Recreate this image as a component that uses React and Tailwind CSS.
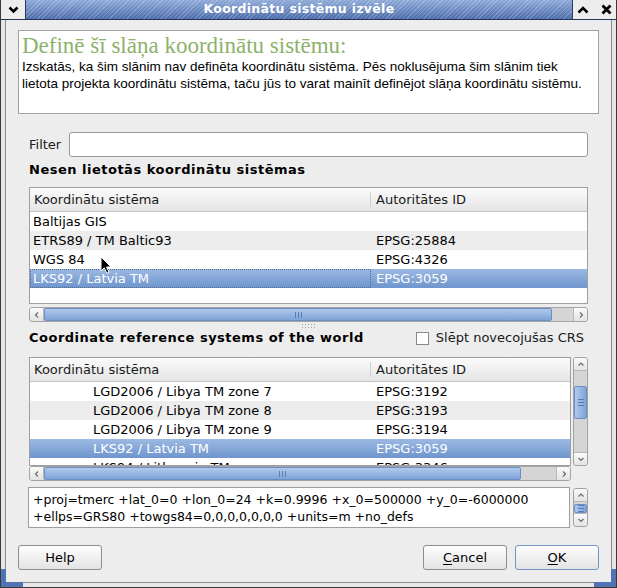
import React from 'react'

const ui = "font-['DejaVu_Sans',sans-serif]"

const recent = [
  { name: 'Baltijas GIS', id: '' },
  { name: 'ETRS89 / TM Baltic93', id: 'EPSG:25884' },
  { name: 'WGS 84', id: 'EPSG:4326' },
  { name: 'LKS92 / Latvia TM', id: 'EPSG:3059', selected: true },
]

const world = [
  { name: 'LGD2006 / Libya TM zone 7', id: 'EPSG:3192' },
  { name: 'LGD2006 / Libya TM zone 8', id: 'EPSG:3193' },
  { name: 'LGD2006 / Libya TM zone 9', id: 'EPSG:3194' },
  { name: 'LKS92 / Latvia TM', id: 'EPSG:3059', selected: true },
  { name: 'LKS94 / Lithuania TM', id: 'EPSG:3346' },
]

function Arrow({ dir, size = 8, stroke = '#6b6b6b', width = 1.2 }) {
  const d = {
    up: 'M1.5 5.5 L4 3 L6.5 5.5',
    down: 'M1.5 3 L4 5.5 L6.5 3',
    left: 'M5 1.5 L2.5 4 L5 6.5',
    right: 'M3 1.5 L5.5 4 L3 6.5',
  }[dir]
  return (
    <svg width={size} height={size} viewBox="0 0 8 8" fill="none">
      <path d={d} stroke={stroke} strokeWidth={width} />
    </svg>
  )
}

function ScrollButton({ dir, className = '' }) {
  return (
    <div className={`flex items-center justify-center bg-linear-to-b from-[#fbfbfb] to-[#e3e3e3] ${className}`}>
      <Arrow dir={dir} />
    </div>
  )
}

function Grip({ vertical }) {
  return (
    <div className={`flex ${vertical ? 'flex-col gap-[2px]' : 'gap-[2px]'}`}>
      {[0, 1, 2].map(i => (
        <span key={i} className={vertical ? 'h-px w-[6px] bg-[#5a7db7]' : 'w-px h-[6px] bg-[#5a7db7]'} />
      ))}
    </div>
  )
}

const thumbStyle = 'flex items-center justify-center rounded-[2px] border border-[#6b8ec6]'

function HScroll({ thumb, className = '' }) {
  return (
    <div className={`flex h-[15px] rounded-[3px] border border-[#a3a3a3] bg-[#d5d5d5] overflow-hidden ${className}`}>
      <ScrollButton dir="left" className="w-[14px] border-r border-[#b8b8b8]" />
      <div className={`${thumb} ${thumbStyle} bg-linear-to-b from-[#b0c9eb] to-[#7fa3d8]`}>
        <Grip />
      </div>
      <div className="flex-1" />
      <ScrollButton dir="right" className="w-[14px] border-l border-[#b8b8b8]" />
    </div>
  )
}

function VScroll({ before, thumb, className = '' }) {
  return (
    <div className={`flex flex-col w-[15px] rounded-[3px] border border-[#a3a3a3] bg-[#d5d5d5] overflow-hidden ${className}`}>
      <ScrollButton dir="up" className="h-[13px] border-b border-[#b8b8b8]" />
      <div className={before} />
      <div className={`${thumb} ${thumbStyle} bg-linear-to-r from-[#b0c9eb] to-[#7fa3d8]`}>
        <Grip vertical />
      </div>
      <div className="flex-1" />
      <ScrollButton dir="down" className="h-[13px] border-t border-[#b8b8b8]" />
    </div>
  )
}

function CrsTable({ rows, indent, className = '', focus }) {
  return (
    <div className={`border border-[#9f9f9f] bg-white overflow-hidden ${className}`}>
      <div className="flex h-[24px] border-b border-[#c6c6c6] bg-linear-to-b from-[#fbfbfb] to-[#e5e5e5] text-[#1a1a1a]">
        <div className="w-[340px] flex items-center pl-[4px]">Koordinātu sistēma</div>
        <div className="flex py-[4px]">
          <span className="w-px bg-[#cdd1c6]" />
        </div>
        <div className="flex-1 flex items-center pl-[5px]">Autoritātes ID</div>
      </div>
      {rows.map((row, i) => (
        <div
          key={row.name}
          className={`flex h-[19px] items-center ${
            row.selected
              ? 'bg-linear-to-b from-[#9db9e3] to-[#6e95cd] text-white'
              : i % 2 === 1
                ? 'bg-[#ededed] text-black'
                : 'bg-white text-black'
          }`}
        >
          <div
            className={`w-[341px] h-full flex items-center ${indent} ${
              row.selected && focus ? 'outline-1 outline-dotted outline-[#55698d] -outline-offset-1' : ''
            }`}
          >
            {row.name}
          </div>
          <div className="flex-1 pl-[5px]">{row.id}</div>
        </div>
      ))}
    </div>
  )
}

function WinButton({ children, def }) {
  return (
    <button
      className={`w-[84px] h-[25px] rounded-[3px] border bg-linear-to-b from-[#fdfdfd] to-[#e4e4e4] text-[13px] text-black ${
        def ? 'border-[#7493c6]' : 'border-[#8e8e8e]'
      }`}
    >
      {children}
    </button>
  )
}

export default function App() {
  return (
    <div className={`relative w-[617px] h-[588px] flex flex-col border-x border-b border-[#3a3a3a] bg-[#e6e6e6] overflow-hidden ${ui} text-[13px]`}>
      {/* Title bar */}
      <div className="flex h-[20px] border-b border-[#26345a]">
        <div className="w-[24px] flex items-center justify-center bg-[#ededed]">
          <svg width="11" height="8" viewBox="0 0 11 8">
            <path d="M1.5 1.5 L5.5 5.5 L9.5 1.5" fill="none" stroke="#000" strokeWidth="2.6" />
          </svg>
        </div>
        <div className="flex-1 flex items-center justify-center border-x border-[#2b3d66] bg-[repeating-linear-gradient(135deg,rgba(255,255,255,0.2)_0px,rgba(255,255,255,0.2)_1px,transparent_1px,transparent_3px),linear-gradient(to_bottom,#8eaad9,#4c6ca9)] text-white font-bold text-[12.5px] tracking-[0.3px]">
          Koordinātu sistēmu izvēle
        </div>
        <div className="w-[43px] flex items-center justify-between pl-[4px] pr-[4px] bg-[#ededed]">
          <svg width="12" height="8" viewBox="0 0 12 8">
            <path d="M1.5 6.5 L6 2 L10.5 6.5" fill="none" stroke="#000" strokeWidth="2.6" />
          </svg>
          <svg width="11" height="11" viewBox="0 0 11 11">
            <path d="M1.5 1.5 L9.5 9.5 M9.5 1.5 L1.5 9.5" fill="none" stroke="#000" strokeWidth="2.8" />
          </svg>
        </div>
      </div>

      {/* Frame */}
      <div className="flex-1 flex px-[4px] pb-[4px]">
        <div className="flex-1 flex flex-col border-x border-b border-[#8c8c8c] bg-[#ededed] px-[12px] pt-[10px]">
          {/* Header */}
          <div className="h-[84px] border border-[#a2a2a2] bg-white px-[3px] pt-[3px]">
            <div className="font-['Liberation_Serif',serif] text-[23px] leading-[24px] text-[#8db26c]">
              Definē šī slāņa koordinātu sistēmu:
            </div>
            <p className="font-['Liberation_Sans',Arial,sans-serif] text-[13.5px] leading-[17px] text-black">
              Izskatās, ka šim slānim nav definēta koordinātu sistēma. Pēs noklusējuma šim slānim tiek
              <br />
              lietota projekta koordinātu sistēma, taču jūs to varat mainīt definējot slāņa koordinātu sistēmu.
            </p>
          </div>

          <div className="mx-[11px] flex flex-col">
            {/* Filter */}
            <div className="mt-[18px] flex items-center gap-[8px] h-[25px]">
              <span className="text-[#1a1a1a]">Filter</span>
              <input className="flex-1 h-full rounded-[3px] border border-[#999] bg-white outline-none" />
            </div>

            <div className="mt-[5px] h-[16px] leading-[16px] font-bold tracking-[0.5px] text-black">
              Nesen lietotās koordinātu sistēmas
            </div>

            <CrsTable rows={recent} indent="pl-[3px]" focus className="mt-[9px] h-[117px]" />
            <HScroll thumb="w-[508px]" className="mt-[3px]" />

            {/* Splitter handle */}
            <div className="h-[8px] flex justify-center pt-[1px]">
              <div className="w-[16px] h-[5px] bg-[radial-gradient(circle,#a3a3a3_0.7px,transparent_0.9px)] bg-size-[3px_3px]" />
            </div>

            <div className="h-[16px] flex items-center justify-between pr-[4px]">
              <span className="font-bold tracking-[0.5px] text-black leading-[16px]">
                Coordinate reference systems of the world
              </span>
              <label className="flex items-center gap-[7px] text-[#1a1a1a]">
                <span className="w-[13px] h-[13px] border border-[#8a8a8a] bg-white" />
                Slēpt novecojušas CRS
              </label>
            </div>

            <div className="mt-[11px] flex gap-[2px] h-[109px]">
              <CrsTable rows={world} indent="pl-[63px]" className="flex-1 h-full" />
              <VScroll before="h-[15px]" thumb="h-[33px]" className="h-[109px]" />
            </div>
            <div className="flex gap-[2px]">
              <HScroll thumb="w-[477px]" className="flex-1" />
              <div className="w-[15px]" />
            </div>

            {/* Proj definition */}
            <div className="mt-[6px] flex gap-[3px] h-[41px]">
              <div className="flex-1 border border-[#9f9f9f] bg-white pl-[4px] pt-[3px] text-[12.5px] leading-[17px] text-black -ml-px">
                +proj=tmerc +lat_0=0 +lon_0=24 +k=0.9996 +x_0=500000 +y_0=-6000000
                <br />
                +ellps=GRS80 +towgs84=0,0,0,0,0,0,0 +units=m +no_defs
              </div>
              <VScroll before="h-[2px]" thumb="h-[10px]" className="h-[39px] mt-px w-[14px]" />
            </div>
          </div>

          {/* Buttons */}
          <div className="mt-[17px] flex items-center">
            <WinButton>Help</WinButton>
            <div className="flex-1" />
            <div className="flex gap-[8px]">
              <WinButton>
                <span className="underline underline-offset-2">C</span>ancel
              </WinButton>
              <WinButton def>
                <span className="underline underline-offset-2">O</span>K
              </WinButton>
            </div>
          </div>
        </div>
      </div>

      {/* Resize corners */}
      <div className="absolute left-0 bottom-0 w-[5px] h-[18px] bg-[#4f73b4]" />
      <div className="absolute left-0 bottom-0 w-[22px] h-[5px] bg-[#4f73b4]" />
      <div className="absolute right-0 bottom-0 w-[5px] h-[18px] bg-[#4f73b4]" />
      <div className="absolute right-0 bottom-0 w-[22px] h-[5px] bg-[#4f73b4]" />

      {/* Mouse pointer */}
      <svg className="absolute left-[99px] top-[256px]" width="13" height="19" viewBox="0 0 13 19">
        <path d="M1 1 L1 15 L4.3 11.8 L6.8 17.3 L9 16.3 L6.6 11 L11 11 Z" fill="#000" stroke="#fff" strokeWidth="1" />
      </svg>
    </div>
  )
}
